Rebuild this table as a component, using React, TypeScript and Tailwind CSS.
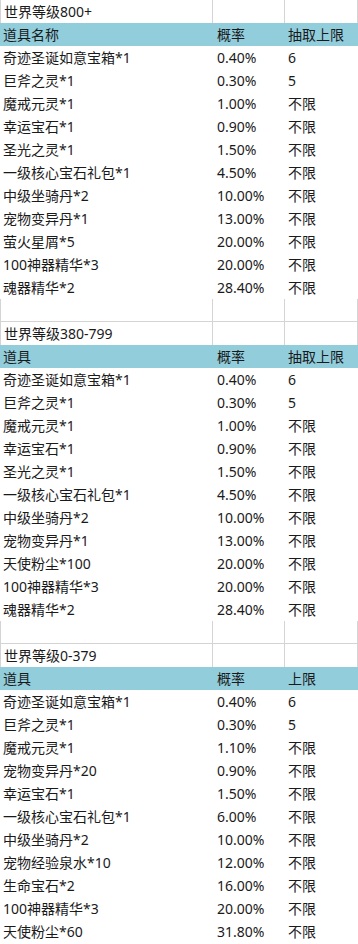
type Row = [string, string, string];

interface Section {
  title: string;
  head: Row;
  rows: Row[];
}

const sections: Section[] = [
  {
    title: '世界等级800+',
    head: ['道具名称', '概率', '抽取上限'],
    rows: [
      ['奇迹圣诞如意宝箱*1', '0.40%', '6'],
      ['巨斧之灵*1', '0.30%', '5'],
      ['魔戒元灵*1', '1.00%', '不限'],
      ['幸运宝石*1', '0.90%', '不限'],
      ['圣光之灵*1', '1.50%', '不限'],
      ['一级核心宝石礼包*1', '4.50%', '不限'],
      ['中级坐骑丹*2', '10.00%', '不限'],
      ['宠物变异丹*1', '13.00%', '不限'],
      ['萤火星屑*5', '20.00%', '不限'],
      ['100神器精华*3', '20.00%', '不限'],
      ['魂器精华*2', '28.40%', '不限'],
    ],
  },
  {
    title: '世界等级380-799',
    head: ['道具', '概率', '抽取上限'],
    rows: [
      ['奇迹圣诞如意宝箱*1', '0.40%', '6'],
      ['巨斧之灵*1', '0.30%', '5'],
      ['魔戒元灵*1', '1.00%', '不限'],
      ['幸运宝石*1', '0.90%', '不限'],
      ['圣光之灵*1', '1.50%', '不限'],
      ['一级核心宝石礼包*1', '4.50%', '不限'],
      ['中级坐骑丹*2', '10.00%', '不限'],
      ['宠物变异丹*1', '13.00%', '不限'],
      ['天使粉尘*100', '20.00%', '不限'],
      ['100神器精华*3', '20.00%', '不限'],
      ['魂器精华*2', '28.40%', '不限'],
    ],
  },
  {
    title: '世界等级0-379',
    head: ['道具', '概率', '上限'],
    rows: [
      ['奇迹圣诞如意宝箱*1', '0.40%', '6'],
      ['巨斧之灵*1', '0.30%', '5'],
      ['魔戒元灵*1', '1.10%', '不限'],
      ['宠物变异丹*20', '0.90%', '不限'],
      ['幸运宝石*1', '1.50%', '不限'],
      ['一级核心宝石礼包*1', '6.00%', '不限'],
      ['中级坐骑丹*2', '10.00%', '不限'],
      ['宠物经验泉水*10', '12.00%', '不限'],
      ['生命宝石*2', '16.00%', '不限'],
      ['100神器精华*3', '20.00%', '不限'],
      ['天使粉尘*60', '31.80%', '不限'],
    ],
  },
];

const grid = 'grid grid-cols-[213px_72px_73px] h-[23px] leading-[23px]';

// white spreadsheet row with the grey cell lines
function PlainRow({ label, bottom }: { label: string; bottom?: boolean }) {
  const line = bottom ? 'border-b border-[#d4d4d4]' : '';
  return (
    <div className={grid}>
      <div className={`border-l border-r border-[#d4d4d4] pl-[3px] ${line}`}>{label}</div>
      <div className={`border-r border-[#d4d4d4] ${line}`} />
      <div className={`border-r border-[#d4d4d4] ${line}`} />
    </div>
  );
}

export default function App() {
  return (
    <div className="w-[358px] h-[944px] overflow-hidden bg-white text-[14px] text-[#1a1a1a] font-['Noto_Sans','Noto_Sans_CJK_SC',sans-serif]">
      {sections.map((s, i) => (
        <div key={s.title}>
          {i > 0 && <PlainRow label="" bottom />}
          <PlainRow label={s.title} />
          <div className={`${grid} bg-[#92cddc]`}>
            <div className="pl-[3px]">{s.head[0]}</div>
            <div className="pl-[4px]">{s.head[1]}</div>
            <div className="pl-[3px]">{s.head[2]}</div>
          </div>
          {s.rows.map((r, j) => (
            <div key={j} className={grid}>
              <div className="pl-[3px] whitespace-nowrap">{r[0]}</div>
              <div className="pl-[4px]">{r[1]}</div>
              <div className="pl-[3px]">{r[2]}</div>
            </div>
          ))}
        </div>
      ))}
    </div>
  );
}
